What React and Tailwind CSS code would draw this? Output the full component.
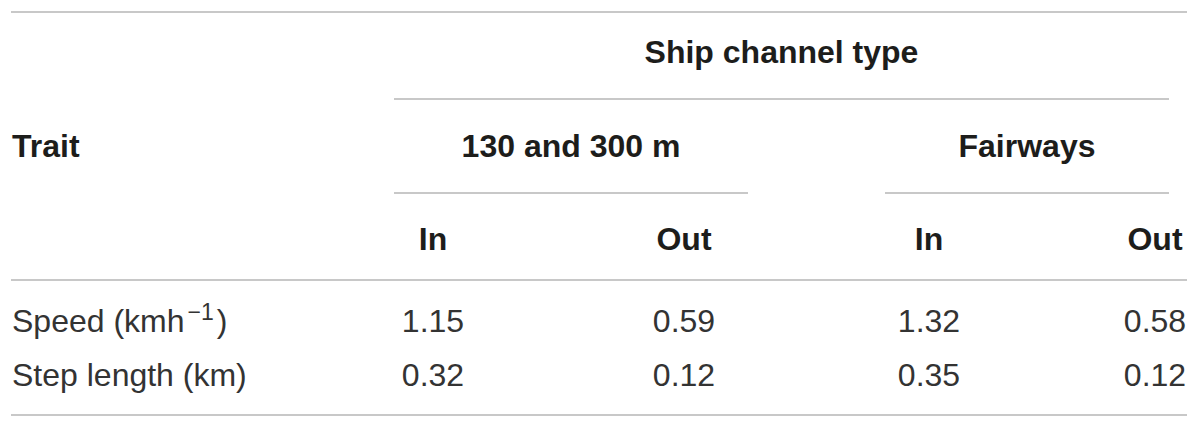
import React from "react";

const COLS = "grid grid-cols-[372px_100px_151px_100px_145px_100px_144px_64px]";

export default function App() {
  return (
    <div className="w-[1200px] h-[429px] bg-white pt-[11px] pl-[11px] font-['Liberation_Sans',Arial,sans-serif]">
      <div className="w-[1176px]">
        <div className="h-[2px] bg-[#c8c8c8]" />
        {/* header block */}
        <div className="flex text-[32px] leading-[36px] font-bold text-[#1d1d1b]">
          <div className="w-[372px] flex items-center pl-[1px]">Trait</div>
          <div className="flex-1 flex flex-col">
            <div className="pt-[21px] pb-[28px] ml-[11px] mr-[18px] text-center">Ship channel type</div>
            <div className="h-[2px] bg-[#c8c8c8] ml-[11px] mr-[18px]" />
            <div className="flex ml-[11px] mr-[18px]">
              <div className="w-[354px] flex flex-col">
                <div className="pt-[28px] pb-[28px] text-center">130 and 300 m</div>
                <div className="h-[2px] bg-[#c8c8c8]" />
              </div>
              <div className="w-[137px]" />
              <div className="w-[284px] flex flex-col">
                <div className="pt-[28px] pb-[28px] text-center">Fairways</div>
                <div className="h-[2px] bg-[#c8c8c8]" />
              </div>
            </div>
            <div className="grid grid-cols-[100px_151px_100px_145px_100px_144px_64px] pt-[27px] pb-[22px]">
              <div className="text-center">In</div>
              <div />
              <div className="text-center">Out</div>
              <div />
              <div className="text-center">In</div>
              <div />
              <div className="text-center">Out</div>
            </div>
          </div>
        </div>
        <div className="h-[2px] bg-[#c8c8c8]" />
        <div className="pt-[22px] pb-[21px] text-[32px] leading-[36px] text-[#333333] flex flex-col gap-[18px]">
          <div className={COLS}>
            <div className="pl-[1px] whitespace-nowrap">
              Speed (kmh<sup className="text-[23px] leading-none relative -top-[12px] ml-[3px] mr-[3px]">−1</sup>)
            </div>
            <div className="text-center">1.15</div>
            <div />
            <div className="text-center">0.59</div>
            <div />
            <div className="text-center">1.32</div>
            <div />
            <div className="text-center">0.58</div>
          </div>
          <div className={COLS}>
            <div className="pl-[1px] whitespace-nowrap">Step length (km)</div>
            <div className="text-center">0.32</div>
            <div />
            <div className="text-center">0.12</div>
            <div />
            <div className="text-center">0.35</div>
            <div />
            <div className="text-center">0.12</div>
          </div>
        </div>
        <div className="h-[2px] bg-[#c8c8c8]" />
      </div>
    </div>
  );
}
